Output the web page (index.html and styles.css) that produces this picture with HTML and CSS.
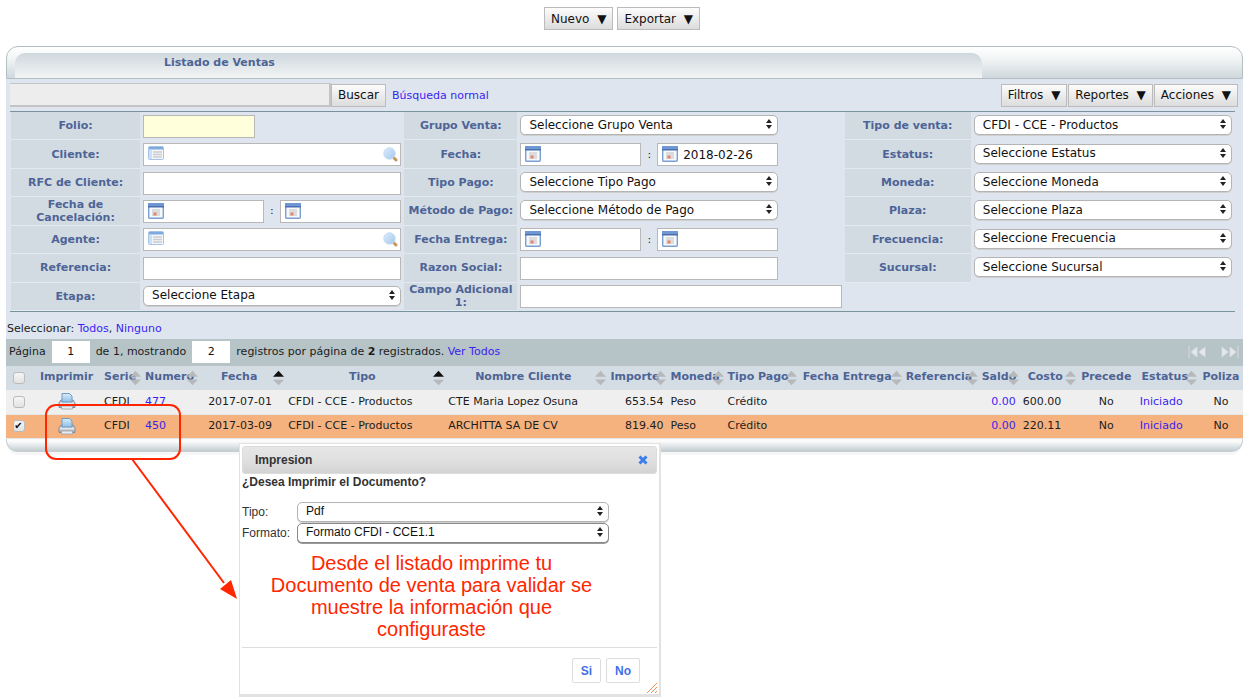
FILE: index.html
```
<!DOCTYPE html>
<html lang="es">
<head>
<meta charset="utf-8">
<title>Listado de Ventas</title>
<link rel="stylesheet" href="styles.css">
</head>
<body>
<svg class="defs" aria-hidden="true">
  <defs>
    <linearGradient id="paper" x1="0" y1="0" x2="0" y2="1"><stop offset="0" stop-color="#d7ecfb"/><stop offset="1" stop-color="#8fbfe6"/></linearGradient>
    <linearGradient id="lens" x1="0" y1="0" x2="1" y2="1"><stop offset="0" stop-color="#dcedfb"/><stop offset="1" stop-color="#a3c8ee"/></linearGradient>
    <linearGradient id="metal" x1="0" y1="0" x2="0" y2="1"><stop offset="0" stop-color="#9aa2aa"/><stop offset=".45" stop-color="#e6eaee"/><stop offset="1" stop-color="#8d959d"/></linearGradient>
  </defs>
  <symbol id="updown" viewBox="0 0 6 10"><path d="M3 0 6 4H0zM3 10 0 6h6z" fill="#222"/></symbol>
  <symbol id="sort" viewBox="0 0 12 16"><path d="M6 0 12 6.500H0zM6 16 0 9.500h12z" fill="#b6b8ba"/></symbol>
  <symbol id="sort-up" viewBox="0 0 12 16"><path d="M6 0 12 6.500H0z" fill="#111"/><path d="M6 16 0 10h12z" fill="#b6b8ba"/></symbol>
  <symbol id="list" viewBox="0 0 16 14"><rect x=".5" y=".5" width="15" height="13" rx="1" fill="#f4f6f8" stroke="#a5c3e4"/><path d="M1 1h14v2.500H1z" fill="#7faae0"/><path d="M1 4h3v9H1z" fill="#c9e0f8"/><path d="M5 6h9M5 8.500h9M5 11h9" stroke="#c9ccd0" stroke-width="1.500"/></symbol>
  <symbol id="calendar" viewBox="0 0 16 16"><rect x=".7" y=".7" width="14.600" height="14.600" rx="1" fill="#f6f9fc" stroke="#7c9fd2" stroke-width="1.400"/><path d="M0 0h16v4H0z" fill="#6f97d3"/><path d="M0 3h16v1.500H0z" fill="#4a6fb0"/><path d="M4 6h8v7H4z" fill="#dcdcdc"/><path d="M5.500 9.500h3v3h-3z" fill="#e4846c"/></symbol>
  <symbol id="search" viewBox="0 0 15 15"><path d="m10.500 10.500 2.500 2.500" stroke="#c9955c" stroke-width="3" stroke-linecap="round"/><circle cx="6.500" cy="6.500" r="5.700" fill="url(#lens)" stroke="#c2daf2"/></symbol>
  <symbol id="printer" viewBox="0 0 18 17"><path d="M3 7h12l2 3v4.500H1V10z" fill="url(#metal)" stroke="#858c94"/><path d="M4 .5h7.500L14 3v6H4z" fill="url(#paper)" stroke="#6f9cc4"/><path d="M3.500 13h11v3h-11z" fill="#e9ecef" stroke="#9aa0a6" stroke-width=".8"/></symbol>
</svg>

<div class="page">
  <div class="toolbar">
    <button class="btn" type="button">Nuevo <span>▼</span></button>
    <button class="btn" type="button">Exportar <span>▼</span></button>
  </div>

  <main class="panel">
    <div class="panel-head"><h1 class="panel-tab">Listado de Ventas</h1></div>

    <form class="panel-body">
      <div class="search">
        <input class="search-box" type="text" aria-label="Buscar">
        <button class="btn" type="button">Buscar</button>
        <a class="link search-link" href="#">Búsqueda normal</a>
        <div class="search-actions">
          <button class="btn" type="button">Filtros <span>▼</span></button>
          <button class="btn" type="button">Reportes <span>▼</span></button>
          <button class="btn" type="button">Acciones <span>▼</span></button>
        </div>
      </div>

      <div class="filters">
        <label class="name" for="folio">Folio:</label>
        <div class="field"><input class="box folio" id="folio" type="text"></div>
        <label class="name" for="grupo">Grupo Venta:</label>
        <div class="field"><span class="pick"><select id="grupo"><option>Seleccione Grupo Venta</option></select><svg><use href="#updown"/></svg></span></div>
        <label class="name" for="tipov">Tipo de venta:</label>
        <div class="field"><span class="pick"><select id="tipov"><option>CFDI - CCE - Productos</option></select><svg><use href="#updown"/></svg></span></div>

        <label class="name" for="cliente">Cliente:</label>
        <div class="field"><span class="lookup"><svg class="ico-list"><use href="#list"/></svg><input class="box" id="cliente" type="text"><svg class="ico-search"><use href="#search"/></svg></span></div>
        <label class="name" for="fecha">Fecha:</label>
        <div class="field range"><span class="date"><svg><use href="#calendar"/></svg><input class="box" id="fecha" type="text"></span><span>:</span><span class="date"><svg><use href="#calendar"/></svg><input class="box" type="text" value="2018-02-26" aria-label="Fecha hasta"></span></div>
        <label class="name" for="estatus">Estatus:</label>
        <div class="field"><span class="pick"><select id="estatus"><option>Seleccione Estatus</option></select><svg><use href="#updown"/></svg></span></div>

        <label class="name" for="rfc">RFC de Cliente:</label>
        <div class="field"><input class="box" id="rfc" type="text"></div>
        <label class="name" for="tpago">Tipo Pago:</label>
        <div class="field"><span class="pick"><select id="tpago"><option>Seleccione Tipo Pago</option></select><svg><use href="#updown"/></svg></span></div>
        <label class="name" for="moneda">Moneda:</label>
        <div class="field"><span class="pick"><select id="moneda"><option>Seleccione Moneda</option></select><svg><use href="#updown"/></svg></span></div>

        <label class="name" for="cancel">Fecha de Cancelación:</label>
        <div class="field range"><span class="date"><svg><use href="#calendar"/></svg><input class="box" id="cancel" type="text"></span><span>:</span><span class="date"><svg><use href="#calendar"/></svg><input class="box" type="text" aria-label="Fecha de Cancelación hasta"></span></div>
        <label class="name" for="metodo">Método de Pago:</label>
        <div class="field"><span class="pick"><select id="metodo"><option>Seleccione Método de Pago</option></select><svg><use href="#updown"/></svg></span></div>
        <label class="name" for="plaza">Plaza:</label>
        <div class="field"><span class="pick"><select id="plaza"><option>Seleccione Plaza</option></select><svg><use href="#updown"/></svg></span></div>

        <label class="name" for="agente">Agente:</label>
        <div class="field"><span class="lookup"><svg class="ico-list"><use href="#list"/></svg><input class="box" id="agente" type="text"><svg class="ico-search"><use href="#search"/></svg></span></div>
        <label class="name" for="entrega">Fecha Entrega:</label>
        <div class="field range"><span class="date"><svg><use href="#calendar"/></svg><input class="box" id="entrega" type="text"></span><span>:</span><span class="date"><svg><use href="#calendar"/></svg><input class="box" type="text" aria-label="Fecha Entrega hasta"></span></div>
        <label class="name" for="frec">Frecuencia:</label>
        <div class="field"><span class="pick"><select id="frec"><option>Seleccione Frecuencia</option></select><svg><use href="#updown"/></svg></span></div>

        <label class="name" for="ref">Referencia:</label>
        <div class="field"><input class="box" id="ref" type="text"></div>
        <label class="name" for="razon">Razon Social:</label>
        <div class="field"><input class="box" id="razon" type="text"></div>
        <label class="name" for="sucursal">Sucursal:</label>
        <div class="field"><span class="pick"><select id="sucursal"><option>Seleccione Sucursal</option></select><svg><use href="#updown"/></svg></span></div>

        <label class="name" for="etapa">Etapa:</label>
        <div class="field"><span class="pick"><select id="etapa"><option>Seleccione Etapa</option></select><svg><use href="#updown"/></svg></span></div>
        <label class="name" for="campo">Campo Adicional 1:</label>
        <div class="field"><input class="box wide" id="campo" type="text"></div>
      </div>

      <p class="select-all">Seleccionar: <a class="link" href="#">Todos</a>, <a class="link" href="#">Ninguno</a></p>

      <div class="pager">
        <label for="pagina">Página</label>
        <input id="pagina" type="text" value="1">
        <label for="porpag">de 1, mostrando</label>
        <input id="porpag" type="text" value="2">
        <span>registros por página de <b>2</b> registrados. <a class="link" href="#">Ver Todos</a></span>
        <div class="pager-nav">
          <button type="button" aria-label="Primera página"><svg viewBox="0 0 18 12"><path d="M1 0v12M9 1v10L3 6zM17 1v10l-6-5z"/></svg></button>
          <button type="button" aria-label="Última página"><svg viewBox="0 0 18 12"><path d="M17 0v12M1 1v10l6-5zM9 1v10l6-5z"/></svg></button>
        </div>
      </div>

      <table class="list">
        <colgroup>
          <col class="w25"><col class="w71"><col class="w41"><col class="w57"><col class="w86"><col class="w160"><col class="w162"><col class="w60"><col class="w57"><col class="w73"><col class="w105"><col class="w76"><col class="w41"><col class="w57"><col class="w57"><col class="w64"><col class="w44">
        </colgroup>
        <thead>
          <tr>
            <th><input type="checkbox" aria-label="Seleccionar todos"></th>
            <th class="plain">Imprimir</th>
            <th>Serie<svg><use href="#sort"/></svg></th>
            <th>Numero<svg><use href="#sort"/></svg></th>
            <th>Fecha<svg><use href="#sort-up"/></svg></th>
            <th>Tipo<svg><use href="#sort-up"/></svg></th>
            <th>Nombre Cliente<svg><use href="#sort"/></svg></th>
            <th>Importe<svg><use href="#sort"/></svg></th>
            <th>Moneda<svg><use href="#sort"/></svg></th>
            <th>Tipo Pago<svg><use href="#sort"/></svg></th>
            <th>Fecha Entrega<svg><use href="#sort"/></svg></th>
            <th>Referencia<svg><use href="#sort"/></svg></th>
            <th>Saldo<svg><use href="#sort"/></svg></th>
            <th>Costo<svg><use href="#sort"/></svg></th>
            <th class="plain">Precede</th>
            <th class="status">Estatus<svg><use href="#sort"/></svg></th>
            <th class="plain">Poliza</th>
          </tr>
        </thead>
        <tbody>
          <tr>
            <td class="mid"><input type="checkbox" aria-label="Seleccionar 477"></td>
            <td class="mid"><svg class="printer"><use href="#printer"/></svg></td>
            <td>CFDI</td><td><a class="link" href="#">477</a></td><td class="day">2017-07-01</td><td>CFDI - CCE - Productos</td><td>CTE Maria Lopez Osuna</td><td class="num">653.54</td><td>Peso</td><td>Crédito</td><td></td><td></td><td class="num"><a class="link" href="#">0.00</a></td><td>600.00</td><td class="mid">No</td><td class="status"><a class="link" href="#">Iniciado</a></td><td class="mid">No</td>
          </tr>
          <tr class="picked">
            <td class="mid"><input type="checkbox" checked aria-label="Seleccionar 450"></td>
            <td class="mid"><svg class="printer"><use href="#printer"/></svg></td>
            <td>CFDI</td><td><a class="link" href="#">450</a></td><td class="day">2017-03-09</td><td>CFDI - CCE - Productos</td><td>ARCHITTA SA DE CV</td><td class="num">819.40</td><td>Peso</td><td>Crédito</td><td></td><td></td><td class="num"><a class="link" href="#">0.00</a></td><td>220.11</td><td class="mid">No</td><td class="status"><a class="link" href="#">Iniciado</a></td><td class="mid">No</td>
          </tr>
        </tbody>
      </table>
    </form>
    <div class="panel-foot"></div>
  </main>
</div>

<section class="dialog" role="dialog" aria-labelledby="dlg-title">
  <header class="dialog-head">
    <h2 id="dlg-title">Impresion</h2>
    <button type="button" aria-label="Cerrar"><svg viewBox="0 0 10 10"><path d="m1.500 1.500 7 7m0-7-7 7"/></svg></button>
  </header>
  <div class="dialog-body">
    <p class="question">¿Desea Imprimir el Documento?</p>
    <div class="row"><label for="d-tipo">Tipo:</label><span class="pick"><select id="d-tipo"><option>Pdf</option></select><svg><use href="#updown"/></svg></span></div>
    <div class="row focus"><label for="d-formato">Formato:</label><span class="pick"><select id="d-formato"><option>Formato CFDI - CCE1.1</option></select><svg><use href="#updown"/></svg></span></div>
    <p class="note">Desde el listado imprime tu<br>Documento de venta para validar se<br>muestre la información que<br>configuraste</p>
  </div>
  <footer class="dialog-foot">
    <button type="button">Si</button>
    <button type="button">No</button>
  </footer>
  <svg class="grip" viewBox="0 0 12 12"><path d="M1 11 11 1M5 11l6-6M9 11l2-2"/></svg>
</section>

<svg class="callout" viewBox="0 0 200 204" aria-hidden="true">
  <rect x="6" y="6" width="134" height="54" rx="10"/>
  <path d="m92 60 92 124"/>
  <path class="tip" d="m197 200-17-10 11-9z"/>
</svg>
</body>
</html>
```

FILE: styles.css
```
* { box-sizing: border-box; }

html, body { height: 100%; overflow: hidden; }

body {
  margin: 0;
  position: relative;
  background: #fff;
  color: #1c1c1c;
  font: 11px/14px "DejaVu Sans", Verdana, sans-serif;
}

.defs { position: absolute; width: 0; height: 0; }

.page { padding: 7px 12px 0 6px; }

.link { color: #3a1ff0; text-decoration: none; }

input, select, button { font: inherit; color: #111; margin: 0; }

.btn {
  height: 23px;
  padding: 0 6px;
  border: 1px solid #bbb;
  background: linear-gradient(#fcfcfc, #dcdcdc);
  font-size: 12px;
  white-space: nowrap;
}
.btn span { margin-left: 4px; }

.toolbar {
  display: flex;
  justify-content: center;
  gap: 4px;
  margin-bottom: 16px;
  padding-right: 5px;
}

/* Panel frame */
.panel-head {
  height: 33px;
  padding: 6px 260px 0 8px;
  border: 1px solid #b4bdc2;
  border-radius: 12px 12px 0 0;
  background: linear-gradient(#fff, #f1f4f5 40%, #cfd8dc);
}

.panel-tab {
  height: 25px;
  margin: 0;
  padding-left: 149px;
  border-radius: 10px 10px 0 0;
  background: linear-gradient(#ced8dd, #f3f4f5);
  color: #4d6496;
  font-size: 11px;
  line-height: 20px;
}

.panel-body { background: #dee5ef; }

.panel-foot {
  height: 13px;
  border: 1px solid #c5ced3;
  border-top: 0;
  border-radius: 0 0 12px 12px;
  background: linear-gradient(#fbfbfb 20%, #dfe5e8 60%, #c3ccd1);
  box-shadow: 0 4px 0 -1px #f7f7f7;
}

/* Search row */
.search {
  display: flex;
  align-items: center;
  height: 32px;
  margin: 0 5px 0 4px;
}

.search-box {
  width: 321px;
  height: 24px;
  border: 1px solid #c4c4c4;
  border-width: 1px 2px 2px 0;
  background: #ededed;
}

.search-link { margin-left: 6px; padding-top: 2px; }

.search-actions { display: flex; gap: 1px; margin-left: auto; }

/* Filter grid */
.filters {
  display: grid;
  grid-template-columns: 130fr 263fr 114fr 326fr 127fr 264fr;
  grid-template-rows: repeat(7, minmax(28px, 1fr));
  min-height: 201px;
  margin: 0 8px 0 4px;
  border: solid #78939c;
  border-width: 1px 0;
}

.name {
  display: flex;
  align-items: center;
  justify-content: center;
  border-bottom: 1px solid #e4eaf2;
  border-left: 1px solid #dee5ef;
  background: #d3dbe2;
  color: #4d6496;
  font-weight: bold;
  line-height: 13px;
  text-align: center;
}

.field { display: flex; align-items: center; padding: 0 2px 0 3px; }

.box {
  width: 258px;
  height: 23px;
  padding: 0 6px;
  border: 1px solid #b8b8b8;
  background: #fff;
  font-size: 12px;
}

.box.folio { width: 112px; background: #ffffdc; }
.box.wide { width: 100%; }

.range { gap: 6px; }
.date, .lookup, .pick { position: relative; display: block; }
.date .box { width: 121px; padding-left: 25px; }
.date svg { position: absolute; left: 5px; top: 3px; width: 16px; height: 16px; }
.ico-list { position: absolute; left: 5px; top: 3px; width: 16px; height: 14px; }
.ico-search { position: absolute; right: 3px; top: 4px; width: 15px; height: 15px; }

.pick { width: 258px; }
.pick select {
  display: block;
  width: 100%;
  height: 20px;
  padding: 0 20px 1px 8px;
  border: 1px solid #b4b4b4;
  border-radius: 5px;
  background: #fff;
  box-shadow: 0 1px 0 #cfcfcf;
  font-size: 12px;
  appearance: none;
}
.pick svg { position: absolute; right: 6px; top: 4px; width: 6px; height: 10px; pointer-events: none; }
.filters .pick { margin-bottom: 2px; }

.select-all { margin: 0; padding: 10px 1px 3px; }

/* Pagination bar */
.pager {
  display: flex;
  align-items: center;
  gap: 6px;
  height: 27px;
  padding-left: 3px;
  padding-bottom: 2px;
  background: #b6c3c7;
}
.pager input {
  width: 38px;
  height: 22px;
  border: 0;
  background: #fff;
  text-align: center;
}
.pager-nav { display: flex; gap: 15px; margin-left: auto; padding-right: 4px; }
.pager-nav button { width: 18px; height: 14px; padding: 0; border: 0; background: none; }
.pager-nav svg { display: block; width: 18px; height: 12px; fill: #e6e9ea; stroke: #d6dcde; }

/* Listing */
.list { width: 100%; border-collapse: collapse; table-layout: fixed; }
.list th {
  position: relative;
  height: 24px;
  padding: 0 10px 2px 2px;
  background: #d5dde4;
  color: #4d6496;
  white-space: nowrap;
}
.list th.plain { padding: 0 2px 2px; }
.list th:first-child { padding: 0; }
.list th svg { position: absolute; right: 2px; top: 4px; width: 11px; height: 16px; }
.list td {
  height: 24px;
  padding: 0 2px;
  border-bottom: 1px solid #e4e6e8;
  background: #efefef;
  white-space: nowrap;
}
.list td.mid { text-align: center; }
.list td.num { text-align: right; padding-right: 5px; }
.list td.day { padding-left: 8px; }
.list td.status { padding-left: 5px; }
.list th.status { padding-left: 6px; }
.list .picked td { background: #f5b27f; }
.list td svg { display: block; width: 18px; height: 17px; margin: 0 auto; }

.w25 { width: 25px; } .w41 { width: 41px; } .w44 { width: 44px; }
.w57 { width: 57px; } .w60 { width: 60px; } .w64 { width: 64px; }
.w71 { width: 71px; } .w73 { width: 73px; } .w76 { width: 76px; }
.w86 { width: 86px; } .w105 { width: 105px; } .w160 { width: 160px; }
.w162 { width: 162px; }

.list input {
  display: block;
  width: 12px;
  height: 12px;
  margin: 0 auto;
  border: 1px solid #bbb;
  border-radius: 3px;
  background: linear-gradient(#f6f6f6, #e2e2e2);
  appearance: none;
}
.list input:checked::before {
  content: "✔";
  display: block;
  font-size: 10px;
  line-height: 10px;
  text-align: center;
}

/* Print dialog floating over the listing */
.dialog {
  position: absolute;
  left: 239px;
  top: 443px;
  width: 422px;
  padding: 2px;
  border: solid #e2e2e2;
  border-width: 1px 2px 3px 1px;
  background: #fff;
  color: #333;
  font: 12px/16px "Liberation Sans", Arial, sans-serif;
}
.dialog-head {
  display: flex;
  align-items: center;
  justify-content: space-between;
  height: 28px;
  padding: 0 8px 0 12px;
  border: 1px solid #dcdcdc;
  border-radius: 3px;
  background: linear-gradient(#e6e6e6, #e0e0e0 50%, #d3d3d3);
}
.dialog-head h2 { margin: 0; font-size: 12px; }
.dialog-head button { width: 10px; height: 10px; padding: 0; border: 0; background: none; }
.dialog-head svg { display: block; fill: none; stroke: #3b7dea; stroke-width: 3; }
.question { margin: 0 0 11px; font-weight: bold; }
.row { display: flex; align-items: center; height: 21px; }
.row label { width: 55px; }
.row .pick { width: 312px; }
.row.focus select { border-color: #888; box-shadow: 0 1px 0 #999; }
.note {
  margin: 9px 36px 0 0;
  color: #ff2600;
  font-size: 20px;
  line-height: 22px;
  text-align: center;
  white-space: nowrap;
}
.dialog-foot {
  display: flex;
  justify-content: flex-end;
  gap: 5px;
  margin-top: 7px;
  padding: 10px 17px 9px;
  border-top: 1px solid #ddd;
}
.dialog-foot button {
  height: 25px;
  padding: 0 8px;
  border: 1px solid #ddd;
  border-radius: 2px;
  background: #fff;
  color: #3f6fe8;
  font-weight: bold;
}
.grip { position: absolute; right: 1px; bottom: 0; width: 12px; height: 12px; fill: none; stroke: #f0925c; }

/* Red marker and arrow drawn on top */
.callout {
  position: absolute;
  left: 40px;
  top: 399px;
  width: 200px;
  height: 204px;
  fill: none;
  stroke: #ff2600;
  stroke-width: 2;
  pointer-events: none;
}
.callout .tip { fill: #ff2600; stroke: none; }
```
